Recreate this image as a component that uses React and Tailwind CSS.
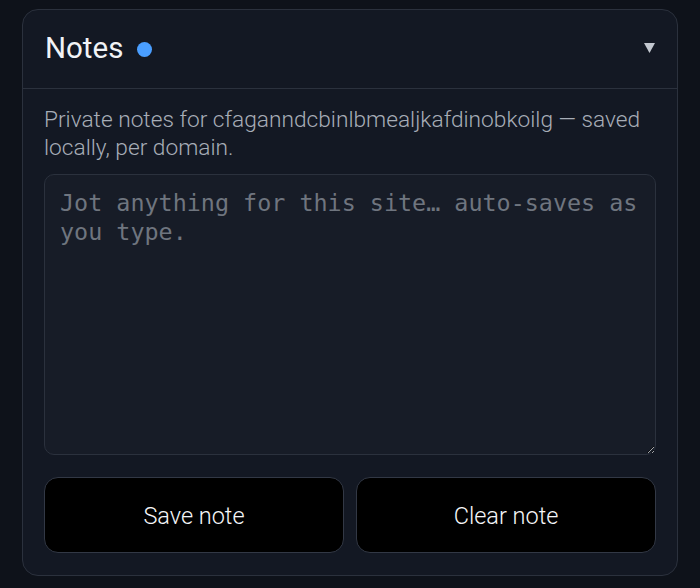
import { useState } from 'react'

export default function App() {
  const [note, setNote] = useState('')
  const [open, setOpen] = useState(true)

  return (
    <div className="min-h-[588px] w-full bg-[#0e121a] px-[22px] pt-[9px] font-['Roboto',sans-serif]">
      <section className="overflow-hidden rounded-[16px] border border-[#2b313d] bg-[#131823]">
        <button
          type="button"
          onClick={() => setOpen(!open)}
          className="flex h-[79px] w-full items-center justify-between border-b border-[#2b313d] pl-[22px] pr-[22px] text-left"
        >
          <span className="flex items-center gap-[14px]">
            <span className="text-[29.5px] font-normal leading-none text-[#f1f3f6]">Notes</span>
            <span className="h-[15px] w-[15px] rounded-full bg-[#4a9eff]" />
          </span>
          <svg width="11" height="10" viewBox="0 0 11 10" className="mt-[-2px]">
            <path d="M0 0h11L5.5 10z" fill="#c2c7cf" />
          </svg>
        </button>

        {open && (
          <div className="px-[21px] pb-[22px] pt-[17px]">
            <p className="text-[22.7px] font-light leading-[28px] text-[#a7adb7]">
              Private notes for cfaganndcbinlbmealjkafdinobkoilg — saved locally, per domain.
            </p>
            <textarea
              value={note}
              onChange={(e) => setNote(e.target.value)}
              placeholder="Jot anything for this site… auto-saves as you type."
              className="mt-[12px] block h-[281px] w-full resize-y rounded-[10px] border border-[#2b313d] bg-[#171c27] px-[15px] pt-[14px] font-['DejaVu_Sans_Mono',monospace] text-[23.4px] leading-[29px] text-[#e5e7eb] outline-none placeholder:text-[#6f757f]"
            />
            <div className="mt-[22px] grid grid-cols-2 gap-[12px]">
              <button
                type="button"
                className="h-[76px] rounded-[14px] border border-[#323845] bg-black pt-[3px] text-[23.5px] font-light text-[#f5f6f8]"
              >
                Save note
              </button>
              <button
                type="button"
                onClick={() => setNote('')}
                className="h-[76px] rounded-[14px] border border-[#323845] bg-black pt-[3px] text-[23.5px] font-light text-[#f5f6f8]"
              >
                Clear note
              </button>
            </div>
          </div>
        )}
      </section>
    </div>
  )
}
